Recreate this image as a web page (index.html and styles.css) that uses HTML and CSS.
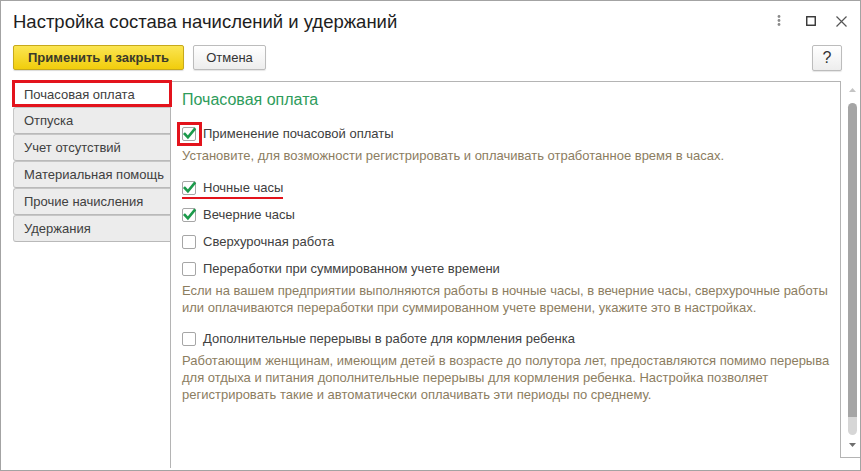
FILE: index.html
```html
<!DOCTYPE html>
<html lang="ru">
<head>
<meta charset="utf-8">
<title>Настройка состава начислений и удержаний</title>
<link rel="stylesheet" href="styles.css">
</head>
<body>
<div class="window">
  <div class="titlebar">
    <div class="title">Настройка состава начислений и удержаний</div>
    <div class="wincontrols">
      <svg class="ic-dots" width="4" height="14" viewBox="0 0 4 14"><circle cx="2" cy="2.5" r="1.4"/><circle cx="2" cy="6.5" r="1.4"/><circle cx="2" cy="10.5" r="1.4"/></svg>
      <svg class="ic-max" width="10" height="10" viewBox="0 0 10 10"><rect x="0.75" y="0.75" width="8.5" height="8.5"/></svg>
      <svg class="ic-close" width="11" height="11" viewBox="0 0 11 11"><path d="M0.5 0.5 L10.5 10.5 M10.5 0.5 L0.5 10.5"/></svg>
    </div>
  </div>

  <div class="toolbar">
    <button class="btn btn-primary">Применить и закрыть</button>
    <button class="btn btn-cancel">Отмена</button>
    <span class="spacer"></span>
    <button class="btn btn-help">?</button>
  </div>

  <div class="main">
    <div class="tabs">
      <div class="tab tab-active">Почасовая оплата<span class="mark-tab"></span></div>
      <div class="tab">Отпуска</div>
      <div class="tab">Учет отсутствий</div>
      <div class="tab">Материальная помощь</div>
      <div class="tab">Прочие начисления</div>
      <div class="tab">Удержания</div>
    </div>

    <div class="frame">
      <div class="content">
        <div class="heading">Почасовая оплата</div>

        <div class="row">
          <span class="cb checked"><svg width="14" height="14" viewBox="0 0 14 14"><path d="M2.8 7 L5.9 10.3 L12.4 2.4"/></svg></span>
          <span class="label">Применение почасовой оплаты</span>
          <span class="mark-cb"></span>
        </div>
        <div class="hint hint-first">Установите, для возможности регистрировать и оплачивать отработанное время в часах.</div>

        <div class="row">
          <span class="cb checked"><svg width="14" height="14" viewBox="0 0 14 14"><path d="M2.8 7 L5.9 10.3 L12.4 2.4"/></svg></span>
          <span class="label">Ночные часы</span>
          <span class="mark-line"></span>
        </div>
        <div class="row">
          <span class="cb checked"><svg width="14" height="14" viewBox="0 0 14 14"><path d="M2.8 7 L5.9 10.3 L12.4 2.4"/></svg></span>
          <span class="label">Вечерние часы</span>
        </div>
        <div class="row">
          <span class="cb"></span>
          <span class="label">Сверхурочная работа</span>
        </div>
        <div class="row">
          <span class="cb"></span>
          <span class="label">Переработки при суммированном учете времени</span>
        </div>
        <div class="hint hint-mid">Если на вашем предприятии выполняются работы в ночные часы, в вечерние часы, сверхурочные работы<br>или оплачиваются переработки при суммированном учете времени, укажите это в настройках.</div>

        <div class="row">
          <span class="cb"></span>
          <span class="label">Дополнительные перерывы в работе для кормления ребенка</span>
        </div>
        <div class="hint">Работающим женщинам, имеющим детей в возрасте до полутора лет, предоставляются помимо перерыва<br>для отдыха и питания дополнительные перерывы для кормления ребенка. Настройка позволяет<br>регистрировать такие и автоматически оплачивать эти периоды по среднему.</div>
      </div>
    </div>

    <div class="scroll">
      <svg class="arr-up" width="7" height="4" viewBox="0 0 7 4"><path d="M0 4 L3.5 0 L7 4 Z"/></svg>
      <div class="thumb"></div>
      <div class="thumb-rest"></div>
      <svg class="arr-down" width="7" height="4" viewBox="0 0 7 4"><path d="M0 0 L7 0 L3.5 4 Z"/></svg>
    </div>
  </div>
</div>
</body>
</html>
```

FILE: styles.css
```css
html, body {
  margin: 0;
  padding: 0;
  background: #ffffff;
}

body {
  font-family: "Liberation Sans", Arial, sans-serif;
  font-size: 13px;
  color: #404040;
}

.window {
  box-sizing: border-box;
  width: 861px;
  height: 471px;
  border: 1px solid #a3a3a3;
  display: flex;
  flex-direction: column;
  background: #fff;
  overflow: hidden;
}

/* Title bar */
.titlebar {
  display: flex;
  align-items: center;
  height: 24px;
  margin-top: 8px;
  padding-left: 12px;
  padding-right: 13px;
}

.title {
  flex: 1;
  font-size: 18.5px;
  line-height: 25px;
  color: #1e1e1e;
  white-space: nowrap;
}

.wincontrols {
  display: flex;
  align-items: center;
}

.ic-dots {
  fill: #8a8a8a;
  margin-right: 25px;
}

.ic-max {
  fill: none;
  stroke: #333;
  stroke-width: 1.4;
  margin-right: 20px;
}

.ic-close {
  fill: none;
  stroke: #555;
  stroke-width: 1.2;
}

/* Toolbar */
.toolbar {
  display: flex;
  align-items: center;
  height: 25px;
  margin-top: 12px;
  padding-left: 12px;
  padding-right: 18px;
}

.btn {
  box-sizing: border-box;
  height: 25px;
  margin: 0;
  padding: 0;
  font-family: "Liberation Sans", Arial, sans-serif;
  font-size: 13px;
  color: #333;
  border-radius: 2px;
  cursor: default;
}

.btn-primary {
  width: 171px;
  font-weight: bold;
  color: #3a3a2a;
  background: linear-gradient(#fbe552, #f1cd0c);
  border: 1px solid #c7a91b;
  box-shadow: 0 1px 1px rgba(0, 0, 0, 0.15);
}

.btn-cancel {
  width: 73px;
  margin-left: 9px;
  background: linear-gradient(#ffffff, #ededed);
  border: 1px solid #bcbcbc;
  box-shadow: 0 1px 1px rgba(0, 0, 0, 0.1);
}

.spacer {
  flex: 1;
}

.btn-help {
  width: 30px;
  height: 26px;
  font-size: 16px;
  background: linear-gradient(#ffffff, #ededed);
  border: 1px solid #bcbcbc;
  box-shadow: 0 1px 1px rgba(0, 0, 0, 0.1);
}

/* Main area */
.main {
  flex: 1;
  display: flex;
  margin-top: 10px;
  padding-left: 11px;
  padding-bottom: 2px;
  min-height: 0;
}

.tabs {
  width: 158px;
  flex: none;
  display: flex;
  flex-direction: column;
}

.tab {
  position: relative;
  box-sizing: border-box;
  height: 27px;
  margin-left: 1px;
  padding-left: 10px;
  line-height: 25px;
  white-space: nowrap;
  color: #404040;
  background: #ececec;
  border: 1px solid #c6c6c6;
  border-right: none;
  border-bottom-color: #b9b9b9;
  border-radius: 3px 0 0 3px;
}

.tab-active {
  background: #fff;
  border-color: #fff;
  line-height: 27px;
  z-index: 2;
}

.mark-tab {
  position: absolute;
  left: -2px;
  top: -1px;
  width: 160px;
  height: 27px;
  box-sizing: border-box;
  border: 3px solid #e3131c;
}

.frame {
  flex: none;
  width: 670px;
  box-sizing: border-box;
  margin-top: 1px;
  border-left: 1px solid #b4b4b4;
  border-top: 1px solid #b4b4b4;
}

.content {
  padding: 8px 0 0 11px;
}

.heading {
  font-size: 16px;
  line-height: 20px;
  color: #2e9c5b;
  margin-bottom: 10px;
}

.row {
  position: relative;
  display: flex;
  align-items: center;
  height: 27px;
  gap: 7px;
}

.label {
  color: #404040;
  white-space: nowrap;
}

.cb {
  box-sizing: border-box;
  width: 14px;
  height: 14px;
  flex: none;
  border: 1px solid #a6a6a6;
  border-radius: 2px;
  background: #fff;
  position: relative;
}

.cb svg {
  position: absolute;
  left: -1px;
  top: -1px;
  overflow: visible;
  fill: none;
  stroke: #1c9a4b;
  stroke-width: 2.6;
  stroke-linecap: square;
}

.mark-cb {
  position: absolute;
  left: -5px;
  top: 2px;
  width: 25px;
  height: 24px;
  box-sizing: border-box;
  border: 3px solid #e3131c;
}

.mark-line {
  position: absolute;
  left: 0;
  top: 23px;
  width: 101px;
  height: 2px;
  background: #e3131c;
}

.hint {
  line-height: 17px;
  color: #8c7d5f;
  white-space: nowrap;
}

.hint-first {
  margin-bottom: 10px;
}

.hint-mid {
  margin-bottom: 9px;
}

/* Scrollbar */
.scroll {
  flex: none;
  width: 20px;
  height: 377px;
  box-sizing: border-box;
  margin-top: 1px;
  border-left: 1px solid #b4b4b4;
  border-bottom: 1px solid #b4b4b4;
  padding-top: 7px;
  padding-left: 7px;
  display: flex;
  flex-direction: column;
}

.arr-up {
  fill: #c4c4c4;
  margin-left: 1px;
}

.thumb {
  width: 9px;
  height: 314px;
  margin-top: 11px;
  background: #a5a5a5;
  border-radius: 5px 5px 0 0;
}

.thumb-rest {
  width: 9px;
  height: 18px;
  background: #d6d6d6;
  border-radius: 0 0 5px 5px;
}

.arr-down {
  fill: #6e6e6e;
  margin-top: 8px;
  margin-left: 1px;
}
```
